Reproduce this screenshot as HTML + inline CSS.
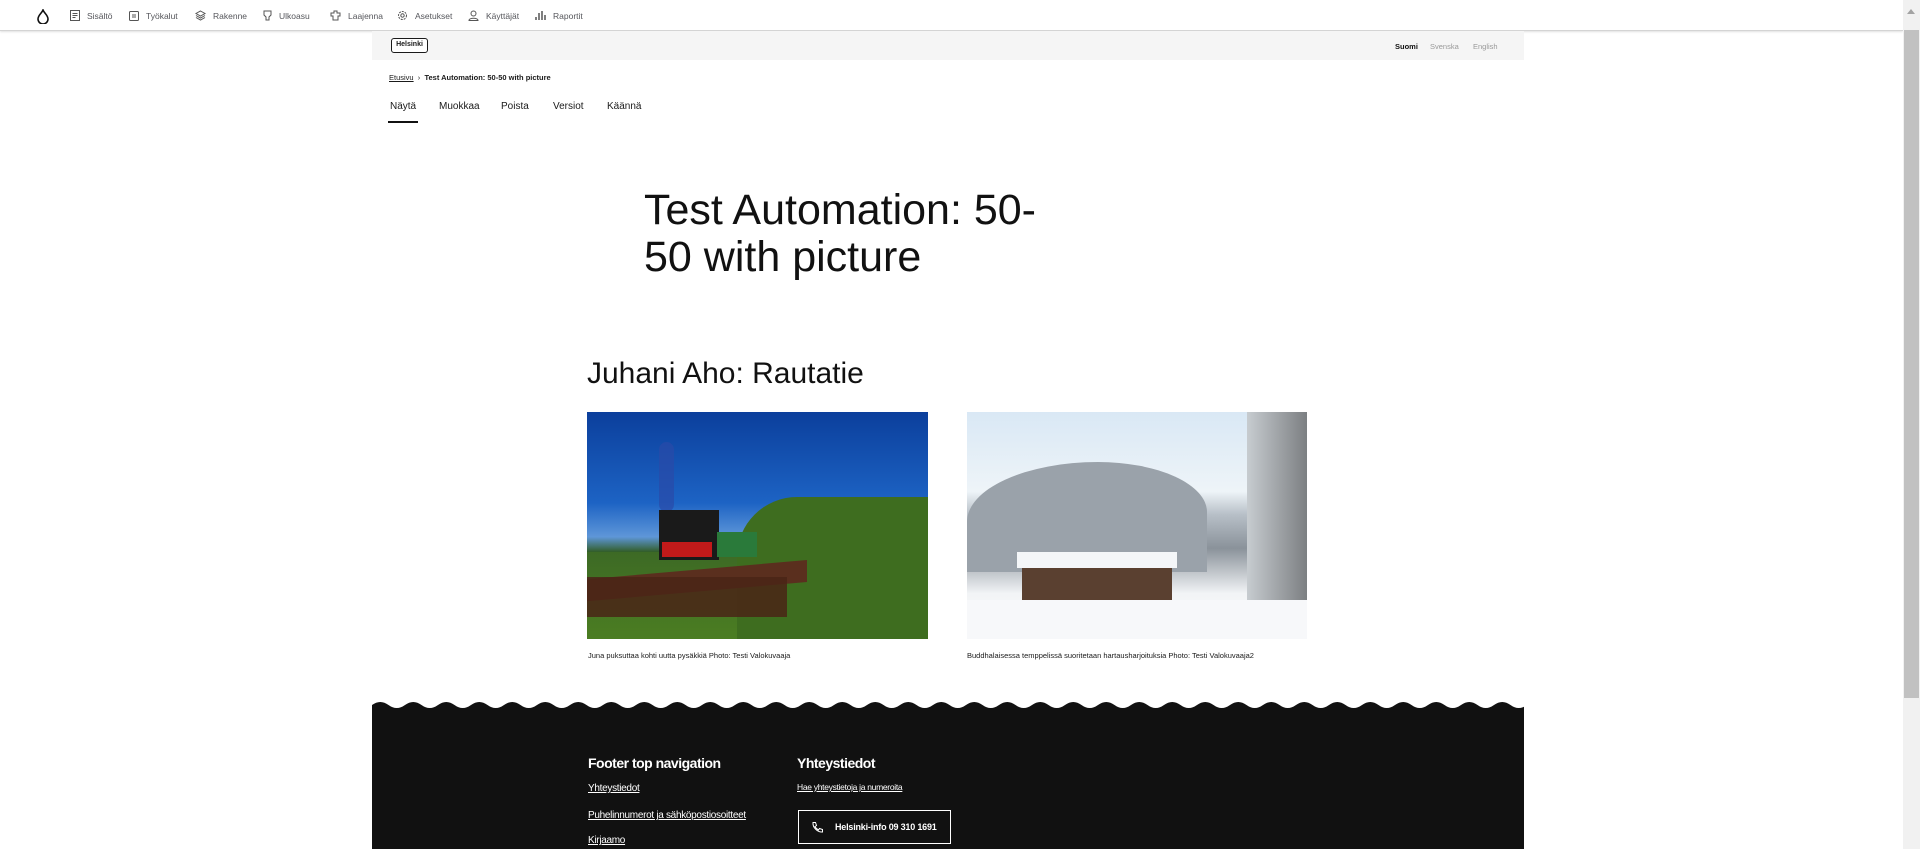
<!DOCTYPE html>
<html><head><meta charset="utf-8">
<style>
*{margin:0;padding:0;box-sizing:border-box}
body{width:1920px;height:849px;overflow:hidden;background:#fff;font-family:"Liberation Sans",sans-serif;color:#1a1a1a;position:relative}
.tb{position:absolute;left:0;top:0;width:1903px;height:31px;background:#fff;border-bottom:1px solid #d4d4d4;box-shadow:0 1px 2px rgba(0,0,0,.12)}
.ti{position:absolute;top:0;height:31px;display:flex;align-items:center;font-size:8.5px;color:#55565b}
.ti svg{margin-right:7px}
.sb{position:absolute;right:0;top:0;width:17px;height:849px;background:#f1f1f1}
.sb .th{position:absolute;left:1px;right:1px;top:30px;height:668px;background:#c1c1c1}
.sb .ar{position:absolute;left:4px;top:9px;width:0;height:0;border-left:4.5px solid transparent;border-right:4.5px solid transparent;border-bottom:5px solid #a3a3a3}
.band{position:absolute;left:372px;top:31px;width:1152px;height:29px;background:#f5f5f5}
.logo{position:absolute;left:391px;top:38px;width:37px;height:15px;border:1.5px solid #1a1a1a;border-radius:3px;font-size:7px;font-weight:bold;text-align:center;line-height:12px;background:#fff}
.lang{position:absolute;top:42px;font-size:7.5px;color:#777}
.bc{position:absolute;left:389px;top:73px;font-size:7.5px}
.tab{position:absolute;top:101px;font-size:10px}
.h1{position:absolute;left:644px;top:187px;font-size:43px;line-height:47px;color:#111}
.h2{position:absolute;left:587px;top:357px;font-size:30px;color:#111}
.img{position:absolute;top:412px;height:227px;overflow:hidden}
.cap{position:absolute;top:651px;font-size:7.5px}
.foot{position:absolute;left:372px;top:708px;width:1152px;height:141px;background:#111}
.fh{position:absolute;top:755px;color:#fff;font-size:14px;font-weight:bold;letter-spacing:-.5px}
.fl{position:absolute;color:#fff;font-size:10px;text-decoration:underline;letter-spacing:-.3px}
.btn{position:absolute;left:798px;top:810px;width:153px;height:34px;border:1.5px solid #fff;color:#fff;font-size:9px;font-weight:bold;display:flex;align-items:center;padding-left:12px;letter-spacing:-.2px}
</style></head><body>
<div class="tb">
<svg style="position:absolute;left:37px;top:9px" width="12" height="15" viewBox="0 0 12 15"><path d="M6 1C5 4 1 6 1 10a5 5 0 0 0 10 0C11 6 7 4 6 1z" fill="none" stroke="#111" stroke-width="1.6"/></svg>
<div class="ti" style="left:70px"><svg width="10" height="11"><rect x=".5" y=".5" width="9" height="10" fill="none" stroke="#555"/><path d="M2.5 3.5h5M2.5 5.5h5M2.5 7.5h3" stroke="#555"/></svg>Sisältö</div>
<div class="ti" style="left:129px"><svg width="10" height="10"><rect x=".5" y=".5" width="9" height="9" rx="1" fill="none" stroke="#555"/><path d="M4 3v4M6 3v4" stroke="#555"/></svg>Työkalut</div>
<div class="ti" style="left:195px"><svg width="11" height="11"><path d="M5.5 1L10 3.5 5.5 6 1 3.5zM1 5.5l4.5 2.5 4.5-2.5M1 7.5l4.5 2.5 4.5-2.5" fill="none" stroke="#555"/></svg>Rakenne</div>
<div class="ti" style="left:263px"><svg width="9" height="11"><path d="M1 1h7v4l-2 2v3H3V7L1 5z" fill="none" stroke="#555"/></svg>Ulkoasu</div>
<div class="ti" style="left:330px"><svg width="11" height="11"><path d="M4 1h3v2h3v3H8v4H3V6H1V3h3z" fill="none" stroke="#555"/></svg>Laajenna</div>
<div class="ti" style="left:397px"><svg width="11" height="11"><circle cx="5.5" cy="5.5" r="4" fill="none" stroke="#555" stroke-dasharray="2 1"/><circle cx="5.5" cy="5.5" r="1.7" fill="none" stroke="#555"/></svg>Asetukset</div>
<div class="ti" style="left:468px"><svg width="11" height="11"><circle cx="5.5" cy="3.5" r="2.5" fill="none" stroke="#555"/><path d="M1 10.5c0-3 9-3 9 0z" fill="none" stroke="#555"/></svg>Käyttäjät</div>
<div class="ti" style="left:535px"><svg width="11" height="11"><path d="M1 10V7M4 10V3M7 10V1M10 10V5" stroke="#555" stroke-width="1.5"/></svg>Raportit</div>
</div>
<div class="sb"><div class="ar"></div><div class="th"></div></div>
<div class="band"></div>
<div class="logo">Helsinki</div>
<div class="lang" style="left:1395px;color:#111;font-weight:bold">Suomi</div>
<div class="lang" style="left:1430px;color:#999">Svenska</div>
<div class="lang" style="left:1473px;color:#999">English</div>
<div class="bc"><span style="text-decoration:underline">Etusivu</span> &nbsp;›&nbsp; <b>Test Automation: 50-50 with picture</b></div>
<div class="tab" style="left:390px">Näytä</div>
<div class="tab" style="left:439px">Muokkaa</div>
<div class="tab" style="left:501px">Poista</div>
<div class="tab" style="left:553px">Versiot</div>
<div class="tab" style="left:607px">Käännä</div>
<div style="position:absolute;left:388px;top:121px;width:30px;height:2px;background:#111"></div>
<div class="h1">Test Automation: 50-<br>50 with picture</div>
<div class="h2">Juhani Aho: Rautatie</div>
<div class="img" style="left:587px;width:341px;background:linear-gradient(180deg,#0b3f9c 0%,#1d63c4 40%,#5e96d8 55%,#2f5a1e 62%,#3a6d20 100%)">
<div style="position:absolute;left:0;top:140px;width:341px;height:87px;background:linear-gradient(180deg,#3d6a25,#4b7d22)"></div>
<div style="position:absolute;left:150px;top:85px;width:191px;height:142px;background:#3e6d1f;border-radius:60px 0 0 0"></div>
<div style="position:absolute;left:72px;top:30px;width:15px;height:70px;background:#2a4aa8;opacity:.7;border-radius:8px"></div>
<div style="position:absolute;left:72px;top:98px;width:60px;height:50px;background:#1a1a1a"></div>
<div style="position:absolute;left:75px;top:130px;width:50px;height:15px;background:#c21a1a"></div>
<div style="position:absolute;left:130px;top:120px;width:40px;height:25px;background:#2a7a3a"></div>
<div style="position:absolute;left:0;top:148px;width:220px;height:22px;background:#5a2f1e;transform:skewY(-5deg);transform-origin:right"></div>
<div style="position:absolute;left:0;top:165px;width:200px;height:40px;background:#4a2416;opacity:.85"></div>
</div>
<div class="img" style="left:967px;width:340px;background:linear-gradient(180deg,#d9e8f5 0%,#eef4f8 35%,#b8c0c8 45%,#8a929a 60%,#f2f4f6 80%,#fafbfc 100%)">
<div style="position:absolute;left:0;top:50px;width:240px;height:110px;background:#9aa2aa;border-radius:60% 50% 0 0"></div>
<div style="position:absolute;left:55px;top:150px;width:150px;height:40px;background:#5a4030"></div>
<div style="position:absolute;left:50px;top:140px;width:160px;height:16px;background:#f4f6f8"></div>
<div style="position:absolute;left:0;top:188px;width:340px;height:39px;background:#f7f8fa"></div>
<div style="position:absolute;left:280px;top:0;width:60px;height:188px;background:linear-gradient(90deg,#c7ccd0,#7c7f82)"></div>
</div>
<div class="cap" style="left:588px">Juna puksuttaa kohti uutta pysäkkiä Photo: Testi Valokuvaaja</div>
<div class="cap" style="left:967px">Buddhalaisessa temppelissä suoritetaan hartausharjoituksia Photo: Testi Valokuvaaja2</div>
<svg style="position:absolute;left:372px;top:700px" width="1152" height="10"><defs><pattern id="w" width="33" height="10" patternUnits="userSpaceOnUse"><path d="M0 5Q8.25 -1 16.5 5T33 5V10H0z" fill="#111"/></pattern></defs><rect width="1152" height="10" fill="url(#w)"/></svg>
<div class="foot"></div>
<div class="fh" style="left:588px">Footer top navigation</div>
<div class="fh" style="left:797px">Yhteystiedot</div>
<div class="fl" style="left:588px;top:783px">Yhteystiedot</div>
<div class="fl" style="left:588px;top:810px">Puhelinnumerot ja sähköpostiosoitteet</div>
<div class="fl" style="left:588px;top:835px">Kirjaamo</div>
<div class="fl" style="left:797px;top:782px;font-size:8.5px">Hae yhteystietoja ja numeroita</div>
<div class="btn"><svg width="12" height="12" style="margin-right:12px"><path d="M2 1.5l2.5 0 1 3-1.5 1c.8 1.7 1.8 2.7 3.5 3.5l1-1.5 3 1v2.5c-5 .5-10-4.5-9.5-9.5z" fill="none" stroke="#fff"/></svg>Helsinki-info 09 310 1691</div>
</body></html>
